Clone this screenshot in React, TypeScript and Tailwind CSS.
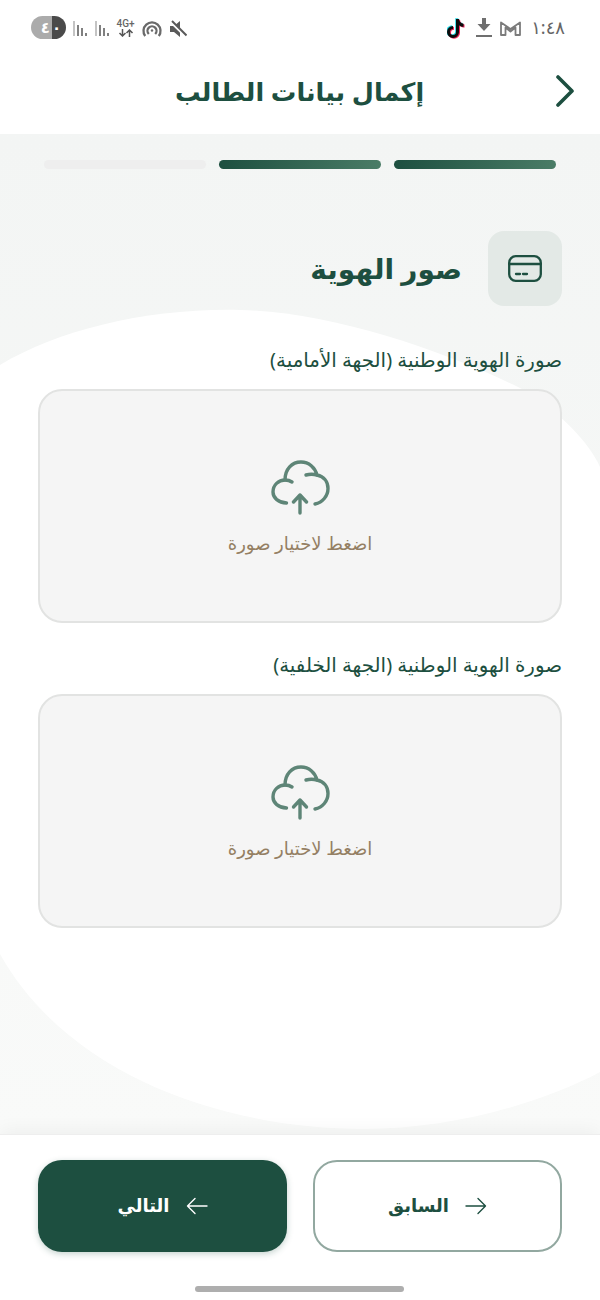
const font = "font-['Noto_Sans','DejaVu_Sans','Liberation_Sans',sans-serif]"

function CloudUpload() {
  return (
    <svg width="59" height="56" viewBox="0 0 59 56" fill="none" stroke="#5e8577" strokeWidth="3.400" strokeLinecap="round" strokeLinejoin="round">
      <path d="M15.500 44 C7.500 43.500 2 39 2 33 C2 26 7.500 21 14 21 C16.500 21 19 21.600 21 23" />
      <path d="M14 21 C14 10 21 3 30 3 C38 3 44 8.500 46 16 C53 17.500 57 23 57 29.500 C57 37 51.500 43.500 44 45" />
      <path d="M35 16 C38.500 15 42.500 15 46 16" />
      <path d="M29 54 V36 M22.500 43 L29 36 L35.500 43" />
    </svg>
  )
}

function UploadBox() {
  return (
    <div className="h-[234px] rounded-[24px] border-2 border-[#e2e3e2] bg-[#f5f5f5] flex flex-col items-center justify-center">
      <div className="mt-[3px]">
        <CloudUpload />
      </div>
      <p className="mt-[15px] text-[18px] leading-[26px] text-[#947f63]">اضغط لاختيار صورة</p>
    </div>
  )
}

function Signal() {
  return (
    <div className="flex items-end gap-[2px] h-[15px] mt-[2px]">
      <div className="w-[2px] h-[15px] bg-[#c4c4c4]" />
      <div className="w-[2px] h-[11px] bg-[#808080]" />
      <div className="w-[2px] h-[8px] bg-[#808080]" />
      <div className="w-[2px] h-[3px] bg-[#808080]" />
    </div>
  )
}

function StatusBar() {
  return (
    <div dir="ltr" className="h-[54px] flex justify-between pl-[31px] pr-[35px] pt-[16px] text-[#666]">
      <div className="flex items-center gap-[7px] h-[23px]">
        <div className="w-[35px] h-[23px] rounded-full overflow-hidden flex text-white text-[15px] font-bold">
          <div className="w-[21px] bg-[#ababab] flex items-center justify-end pr-[2px]">٤</div>
          <div className="w-[14px] bg-[#4a4a4a] flex items-center">٠</div>
        </div>
        <Signal />
        <div className="ml-[1px]">
          <Signal />
        </div>
        <div className="w-[19px] flex flex-col items-center">
          <span className="text-[10px] leading-[10px] font-['Roboto',sans-serif] font-medium text-[#666]">4G+</span>
          <svg width="16" height="8" viewBox="0 0 16 8" fill="none" stroke="#555" strokeWidth="1.500">
            <path d="M4.500 0 V7 M1.500 4 L4.500 7 L7.500 4" />
            <path d="M11.500 8 V1 M8.500 4 L11.500 1 L14.500 4" />
          </svg>
        </div>
        <svg width="20" height="17" viewBox="0 0 20 17" fill="none" stroke="#6a6a6a" strokeWidth="2.300" className="mt-[2px]">
          <path d="M3.200 16 A8.500 8.500 0 1 1 16.800 16" />
          <path d="M6.800 14 A4.500 4.500 0 1 1 13.200 14" />
          <circle cx="10" cy="10.500" r="1.200" fill="#6a6a6a" stroke="none" />
        </svg>
        <svg width="17" height="18" viewBox="0 0 17 18" className="ml-[1px] mt-[2px]">
          <path d="M0 6 H4 L10 1 V17 L4 12 H0 Z" fill="#5a5a5a" />
          <path d="M1 2 L16 16.500" stroke="#fff" strokeWidth="3" />
          <path d="M2 1 L16.500 15.500" stroke="#5a5a5a" strokeWidth="2" />
        </svg>
      </div>
      <div className="flex items-start">
        <TikTok />
        <svg width="16" height="19" viewBox="0 0 16 19" className="ml-[10px] mt-[2px]" fill="#6f6f6f">
          <path d="M6 0 H10 V6 H14.500 L8 13 L1.500 6 H6 Z" />
          <rect x="0" y="17" width="16" height="2" />
        </svg>
        <svg width="21" height="15" viewBox="0 0 21 15" fill="none" stroke="#7b7b7b" strokeWidth="1.800" strokeLinejoin="round" className="ml-[8px] mt-[5px]">
          <path d="M1 1.500 L10.500 8 L20 1.500 V14 H15.500 V6.500 L10.500 10.500 L5.500 6.500 V14 H1 Z" />
        </svg>
        <span className="ml-[10px] text-[18px] leading-[22px] text-[#666]">١:٤٨</span>
      </div>
    </div>
  )
}

function TikTok() {
  const d = 'M9 1 h3 c.3 2.800 2 4.500 4.500 4.800 v3 c-1.600 0-3.200-.5-4.500-1.500 V14 a6 6 0 1 1-6-6 v3 a3 3 0 1 0 3 3 Z'
  return (
    <svg width="19" height="22" viewBox="0 0 19 22" className="mt-[2px]">
      <path d={d} fill="#25d9e6" transform="translate(-0.800 -0.800)" />
      <path d={d} fill="#f0245c" transform="translate(1 0.800)" />
      <path d={d} fill="#0c0c0c" />
    </svg>
  )
}

function ArrowIcon({ left }: { left?: boolean }) {
  return (
    <svg width="22" height="18" viewBox="0 0 22 18" fill="none" stroke="currentColor" strokeWidth="1.400" strokeLinecap="round" strokeLinejoin="round">
      {left ? <path d="M21 9 H1.500 M9 1.500 L1.500 9 L9 16.500" /> : <path d="M1 9 H20.500 M13 1.500 L20.500 9 L13 16.500" />}
    </svg>
  )
}

export default function App() {
  return (
    <div dir="rtl" className={`${font} w-[600px] h-[1300px] bg-white flex flex-col overflow-hidden`}>
      <div className="h-[134px] bg-white">
        <StatusBar />
        <div className="relative h-[80px] flex items-center justify-center">
          <h1 className="text-[25.500px] leading-[40px] font-bold text-[#1d4f40] mt-[-6px] ml-[-1px]">إكمال بيانات الطالب</h1>
          <svg width="20" height="32" viewBox="0 0 20 32" fill="none" stroke="#1d4f40" strokeWidth="3.600" strokeLinecap="round" strokeLinejoin="round" className="absolute right-[25px] top-[21px]">
            <path d="M3 2 L17 16 L3 30" />
          </svg>
        </div>
      </div>

      <div className="relative h-[1000px] bg-[linear-gradient(to_bottom,#f3f5f4,#f9faf9)] px-[38px]">
        <svg className="absolute inset-0" width="600" height="1000" viewBox="0 0 600 1000" fill="none">
          <path d="M0 231 C60 195 150 174 240 176 C330 178 440 215 520 254 C560 277 590 310 600 333 V938 C540 970 450 995 364 995 C230 995 70 945 0 820 Z" fill="#fff" />
        </svg>
        <div className="relative">
          <div className="flex gap-[13px] pt-[26px] px-[6px]">
            <div className="w-[162px] h-[9px] rounded-full bg-[linear-gradient(to_right,#1d4f40,#4a7c66)]" />
            <div className="w-[162px] h-[9px] rounded-full bg-[linear-gradient(to_right,#1d4f40,#4a7c66)]" />
            <div className="w-[162px] h-[9px] rounded-full bg-[#eeeeee]" />
          </div>

          <div className="flex items-center gap-[26px] mt-[62px]">
            <div className="w-[74px] h-[75px] rounded-[16px] bg-[#e3e9e6] flex items-center justify-center">
              <svg width="34" height="27" viewBox="0 0 34 27" fill="none" stroke="#1d4f40" strokeWidth="2.300" strokeLinecap="round">
                <rect x="1.200" y="1.200" width="31.600" height="24.600" rx="6.500" />
                <path d="M1.200 9 H32.800" />
                <path d="M8 19 H12 M15 19 H19" />
              </svg>
            </div>
            <h2 className="text-[28px] leading-[48px] font-bold text-[#1d4f40] mt-[-2px]">صور الهوية</h2>
          </div>

          <p className="mt-[39px] text-[19.850px] leading-[30px] text-[#1d4f40]">صورة الهوية الوطنية (الجهة الأمامية)</p>
          <div className="mt-[14px]">
            <UploadBox />
          </div>

          <p className="mt-[27px] text-[19.850px] leading-[30px] text-[#1d4f40]">صورة الهوية الوطنية (الجهة الخلفية)</p>
          <div className="mt-[14px]">
            <UploadBox />
          </div>
        </div>
      </div>

      <div className="flex-1 bg-white border-t border-[#eeeeee] shadow-[0_-3px_18px_rgba(0,0,0,0.05)] relative">
        <div className="flex gap-[26px] px-[38px] pt-[25px]">
          <button className="w-[249px] h-[92px] rounded-[24px] border-2 border-[#92a8a0] bg-white flex items-center justify-center gap-[16px] text-[#1d4f40]">
            <ArrowIcon />
            <span className="text-[18px] font-bold leading-[30px] mt-[-2px]">السابق</span>
          </button>
          <button className="w-[249px] h-[92px] rounded-[24px] bg-[#1d4f40] shadow-[0_2px_6px_rgba(29,79,64,0.25)] flex items-center justify-center gap-[16px] text-white">
            <ArrowIcon left />
            <span className="text-[18px] font-bold leading-[30px] mt-[-2px]">التالي</span>
          </button>
        </div>
        <div className="absolute left-[195px] top-[151px] w-[209px] h-[6px] rounded-full bg-[#aeaeae]" />
      </div>
    </div>
  )
}
